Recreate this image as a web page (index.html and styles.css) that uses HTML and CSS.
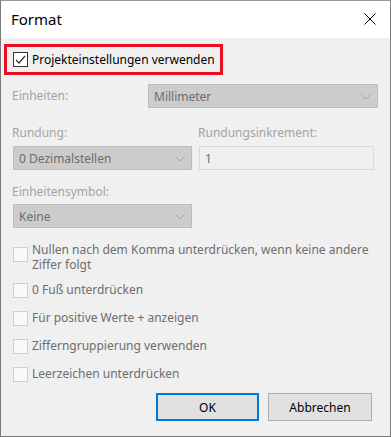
FILE: index.html
```html
<!DOCTYPE html>
<html lang="de">
<head>
<meta charset="utf-8">
<title>Format</title>
<link rel="stylesheet" href="styles.css">
</head>
<body>
<div class="dialog">
  <div class="titlebar">
    <span class="title">Format</span>
    <span class="close">
      <svg width="12" height="12" viewBox="0 0 12 12"><path d="M0.5 0.5 L11.5 11.5 M11.5 0.5 L0.5 11.5" stroke="#000" stroke-width="1" fill="none"/></svg>
    </span>
  </div>
  <div class="content">
    <div class="highlight">
      <span class="cb checked">
        <svg width="13" height="13" viewBox="0 0 13 13"><path d="M2 7 L5 10 L11 3" stroke="#333" stroke-width="1.2" fill="none"/></svg>
      </span>
      <span class="cb-text dark">Projekteinstellungen verwenden</span>
    </div>

    <div class="row-units">
      <span class="label">Einheiten:</span>
      <div class="combo wide"><span>Millimeter</span><svg class="chev" width="10" height="6" viewBox="0 0 10 6"><path d="M0.5 0.5 L5 5 L9.5 0.5" stroke="#a6a6a6" fill="none"/></svg></div>
    </div>

    <div class="row-round">
      <div class="field">
        <span class="label">Rundung:</span>
        <div class="combo narrow"><span>0 Dezimalstellen</span><svg class="chev" width="10" height="6" viewBox="0 0 10 6"><path d="M0.5 0.5 L5 5 L9.5 0.5" stroke="#a6a6a6" fill="none"/></svg></div>
      </div>
      <div class="field">
        <span class="label">Rundungsinkrement:</span>
        <div class="textbox"><span>1</span></div>
      </div>
    </div>

    <div class="field symbol">
      <span class="label">Einheitensymbol:</span>
      <div class="combo narrow"><span>Keine</span><svg class="chev" width="10" height="6" viewBox="0 0 10 6"><path d="M0.5 0.5 L5 5 L9.5 0.5" stroke="#a6a6a6" fill="none"/></svg></div>
    </div>

    <div class="checks">
      <div class="check two"><span class="cb"></span><span class="cb-text">Nullen nach dem Komma unterdrücken, wenn keine andere Ziffer folgt</span></div>
      <div class="check"><span class="cb"></span><span class="cb-text">0 Fuß unterdrücken</span></div>
      <div class="check"><span class="cb"></span><span class="cb-text">Für positive Werte + anzeigen</span></div>
      <div class="check"><span class="cb"></span><span class="cb-text">Zifferngruppierung verwenden</span></div>
      <div class="check"><span class="cb"></span><span class="cb-text">Leerzeichen unterdrücken</span></div>
    </div>

    <div class="buttons">
      <button class="btn default">OK</button>
      <button class="btn">Abbrechen</button>
    </div>
  </div>
</div>
</body>
</html>
```
FILE: styles.css
```css
html, body {
  margin: 0;
  padding: 0;
  background: #c8c8c8;
}
body {
  font-family: "Noto Sans", "DejaVu Sans", sans-serif;
  font-size: 12px;
}
.dialog {
  width: 389px;
  height: 435px;
  border: 1px solid #7a7a7a;
  border-top-color: #9a9a9a;
  background: #f0f0f0;
  display: flex;
  flex-direction: column;
}
.titlebar {
  height: 37px;
  background: #ffffff;
  display: flex;
  align-items: center;
  justify-content: space-between;
  flex: none;
}
.title {
  font-size: 15px;
  color: #000;
  margin-left: 10px;
  margin-top: -2px;
}
.close {
  width: 12px;
  height: 12px;
  margin-right: 14px;
  margin-top: -1px;
  display: flex;
}
.content {
  flex: 1;
  display: flex;
  flex-direction: column;
}
.highlight {
  margin: 6px 0 0 3px;
  width: 207px;
  height: 25px;
  border: 3px solid #e81123;
  display: flex;
  align-items: center;
  gap: 4px;
  padding-left: 6px;
}
.cb {
  width: 13px;
  height: 13px;
  border: 1px solid #cfcfcf;
  background: #f9f9f9;
  flex: none;
  display: flex;
}
.cb.checked {
  border-color: #333;
  background: #fff;
}
.cb-text {
  color: #6d6d6d;
  line-height: 16px;
  white-space: nowrap;
}
.cb-text.dark {
  color: #000;
}
.label {
  color: #a3a3a3;
  line-height: 16px;
  display: block;
}
.row-units {
  display: flex;
  align-items: center;
  margin-top: 9px;
  padding-left: 11px;
}
.row-units .label {
  width: 136px;
}
.combo {
  border: 1px solid #bdbdbd;
  background: #cccccc;
  display: flex;
  align-items: center;
  justify-content: space-between;
  padding: 0 6px 0 5px;
  box-sizing: border-box;
  color: #6d6d6d;
}
.combo.wide {
  width: 230px;
  height: 24px;
}
.combo.narrow {
  width: 179px;
  height: 24px;
}
.chev {
  margin-top: 1px;
}
.row-round {
  display: flex;
  gap: 7px;
  margin-top: 17px;
  padding-left: 12px;
}
.field .label {
  margin-left: -1px;
  margin-bottom: 5px;
}
.textbox {
  width: 175px;
  height: 24px;
  box-sizing: border-box;
  border: 1px solid #d9d9d9;
  background: #f0f0f0;
  display: flex;
  align-items: center;
  padding-left: 5px;
  color: #6d6d6d;
}
.symbol {
  margin-top: 14px;
  padding-left: 12px;
}
.symbol .label {
  margin-bottom: 4px;
}
.checks {
  margin-top: 14px;
  padding-left: 12px;
  display: flex;
  flex-direction: column;
  gap: 12px;
}
.check {
  display: flex;
  align-items: center;
  gap: 4px;
}
.check.two {
  align-items: flex-start;
  margin-bottom: -2px;
}
.check.two .cb {
  margin-top: 5px;
}
.check.two .cb-text {
  white-space: normal;
  line-height: 15px;
}
.check .cb-text {
  width: 350px;
}
.buttons {
  display: flex;
  justify-content: flex-end;
  gap: 9px;
  margin-top: 11px;
  padding-right: 18px;
}
.btn {
  font-family: "Noto Sans", "DejaVu Sans", sans-serif;
  font-size: 12px;
  color: #000;
  height: 28px;
  width: 104px;
  background: #e1e1e1;
  border: 1px solid #adadad;
  padding: 0;
  margin: 0;
}
.btn.default {
  width: 103px;
  border: 2px solid #0078d7;
}
```
